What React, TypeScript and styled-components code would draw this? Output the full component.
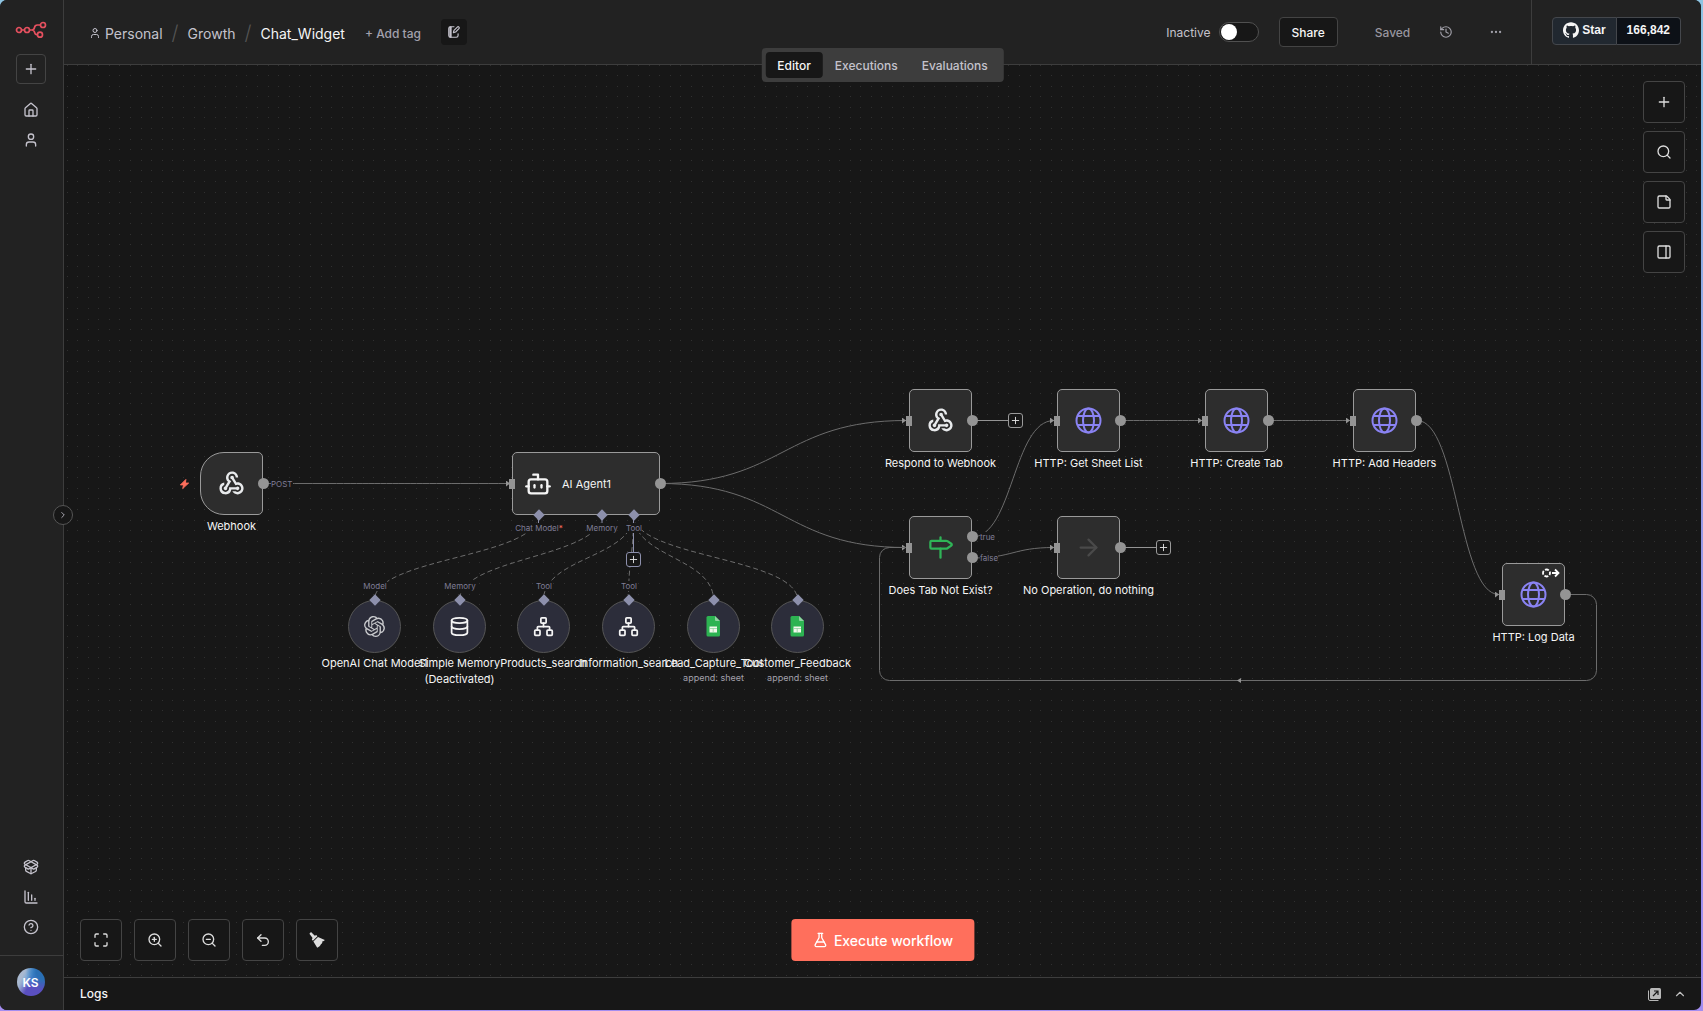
import React from "react";
import styled, { createGlobalStyle, css } from "styled-components";
import {
  ArrowRight,
  Bot,
  ChartColumnDecreasing,
  ChevronRight,
  ChevronUp,
  CircleHelp,
  Database,
  Ellipsis,
  FlaskConical,
  History,
  House,
  Maximize,
  Milestone,
  Network,
  PackageOpen,
  PanelRight,
  Plus,
  Search,
  StickyNote,
  Undo2,
  User,
  ZoomIn,
  ZoomOut,
} from "lucide-react";
import { MdWebhook } from "react-icons/md";
import { SiGithub, SiOpenai } from "react-icons/si";

const color = {
  panel: "#222222",
  canvas: "#171717",
  line: "#3d3d3d",
  node: "#2d2d2d",
  nodeBorder: "#9a9a9a",
  handle: "#949494",
  edge: "#6c6c6c",
  text: "#f5f5f5",
  soft: "#c4c2cc",
  muted: "#a3a1ad",
  aux: "#8d90ac",
  auxText: "#7f7d96",
  subNode: "#2c2d3a",
  primary: "#ff6f5c",
};

const GlobalStyle = createGlobalStyle`
  *, *::before, *::after { box-sizing: border-box; }
  body {
    margin: 0;
    font-family: Inter, "Liberation Sans", sans-serif;
    font-size: 12px;
    color: ${color.text};
    background: linear-gradient(180deg, #8ec4e2 0%, #8fb4e4 18%, #989be6 50%, #a48df0 100%);
  }
  button, input { font: inherit; color: inherit; }
  button { cursor: pointer; padding: 0; }
  a { color: inherit; text-decoration: none; }
`;

/* ---------- shell ---------- */

const Shell = styled.div`
  height: 100vh;
  padding: 0 2px 1px 0;
`;

const Window = styled.div`
  display: flex;
  height: 100%;
  overflow: hidden;
  border-radius: 7px;
  background: ${color.canvas};
`;

const Main = styled.div`
  flex: 1;
  min-width: 0;
  display: flex;
  flex-direction: column;
`;

/* ---------- sidebar ---------- */

const Sidebar = styled.nav`
  position: relative;
  width: 64px;
  flex: none;
  display: flex;
  flex-direction: column;
  background: ${color.panel};
  border-right: 1px solid ${color.line};
`;

const SidebarTop = styled.div`
  display: flex;
  flex-direction: column;
  align-items: center;
  padding: 20px 2px 0 0;
`;

const AddButton = styled.button`
  display: grid;
  place-items: center;
  width: 30px;
  height: 30px;
  margin: 14px 0 11px;
  background: none;
  border: 1px solid #444;
  border-radius: 4px;
  color: ${color.soft};
`;

const SideLink = styled.a`
  display: grid;
  place-items: center;
  width: 30px;
  height: 30px;
  color: ${color.soft};
`;

const SidebarBottom = styled(SidebarTop)`
  margin-top: auto;
  padding: 0 2px 13px 0;
`;

const SidebarUser = styled.div`
  display: grid;
  place-items: center;
  height: 55px;
  padding: 0 2px 2px 0;
  border-top: 1px solid ${color.line};
`;

const Avatar = styled.button`
  width: 28px;
  height: 28px;
  border: 0;
  border-radius: 50%;
  font-weight: 600;
  color: #fff;
  background:
    radial-gradient(circle at 95% 15%, #2a6fb4 0 20%, transparent 50%),
    linear-gradient(115deg, #a9b9d0 0 22%, transparent 48%),
    linear-gradient(160deg, #4f9ce0 0 30%, #5a4fc0 62%);
`;

const CollapseToggle = styled.button`
  position: absolute;
  z-index: 3;
  top: 505px;
  right: -10px;
  display: grid;
  place-items: center;
  width: 20px;
  height: 20px;
  border: 1px solid #555;
  border-radius: 50%;
  background: ${color.canvas};
  color: ${color.soft};
`;

/* ---------- header ---------- */

const Header = styled.header`
  position: relative;
  z-index: 2;
  flex: none;
  display: flex;
  height: 65px;
  background: ${color.panel};
  border-bottom: 1px solid ${color.line};
`;

const Breadcrumb = styled.div`
  display: flex;
  align-items: center;
  gap: 9px;
  padding: 2px 0 0 25px;
  font-size: 14px;
  color: ${color.soft};
`;

const Crumb = styled.a`
  display: flex;
  align-items: center;
  gap: 4px;
`;

const Slash = styled.span`
  font-size: 20px;
  font-weight: 300;
  line-height: 20px;
  color: #555;
`;

const WorkflowName = styled.h1`
  margin: 0;
  font-size: 14px;
  font-weight: 400;
  color: ${color.text};
`;

const AddTag = styled.button`
  margin-left: 11px;
  background: none;
  border: 0;
  font-size: 12px;
  font-weight: 500;
  color: ${color.muted};
`;

const NoteButton = styled.button`
  display: grid;
  place-items: center;
  width: 26px;
  height: 26px;
  margin: 0 0 2px 11px;
  background: ${color.canvas};
  border: 0;
  border-radius: 4px;
  color: ${color.soft};
`;

const HeaderActions = styled.div`
  display: flex;
  align-items: center;
  gap: 20px;
  margin-left: auto;
  padding-right: 21px;
`;

const ActivateLabel = styled.label`
  display: flex;
  align-items: center;
  gap: 8px;
  color: ${color.soft};
`;

const Switch = styled.input`
  appearance: none;
  width: 40px;
  height: 20px;
  margin: 0;
  padding: 1px;
  background: ${color.canvas};
  border: 1px solid #505050;
  border-radius: 10px;

  &::before {
    content: "";
    display: block;
    width: 16px;
    height: 16px;
    border-radius: 50%;
    background: #fff;
  }
  &:checked::before {
    margin-left: auto;
  }
`;

const ShareButton = styled.button`
  height: 30px;
  padding: 0 12px;
  background: ${color.canvas};
  border: 1px solid #444;
  border-radius: 4px;
  font-weight: 500;
`;

const Saved = styled.span`
  padding-left: 17px;
  font-weight: 500;
  color: #98969f;
`;

const GhostButton = styled.button<{ $width: number }>`
  display: grid;
  place-items: center;
  width: ${(p) => p.$width}px;
  height: 30px;
  background: none;
  border: 0;
  color: #a09fa8;
`;

const GithubArea = styled.div`
  display: flex;
  align-items: flex-start;
  padding: 17px 20px 0;
  border-left: 1px solid ${color.line};
`;

const GithubButton = styled.a<{ $side: "left" | "right" }>`
  display: flex;
  align-items: center;
  gap: 3px;
  height: 28px;
  padding: 0 10px 2px;
  border: 1px solid #44474c;
  font: bold 12px "Liberation Sans", sans-serif;
  ${(p) =>
    p.$side === "left"
      ? css`
          background: #212830;
          border-radius: 4px 0 0 4px;
        `
      : css`
          background: #0d1117;
          border-left: 0;
          border-radius: 0 4px 4px 0;
        `}
`;

const Tabs = styled.div`
  position: absolute;
  top: 48px;
  left: 50%;
  transform: translateX(-50%);
  display: flex;
  padding: 4px;
  background: ${color.line};
  border-radius: 4px;
`;

const Tab = styled.button<{ $active?: boolean }>`
  height: 26px;
  padding: 0 12px;
  border: 0;
  border-radius: 4px;
  font-weight: 500;
  background: ${(p) => (p.$active ? color.canvas : "none")};
  color: ${(p) => (p.$active ? color.text : color.soft)};
`;

/* ---------- canvas ---------- */

const Canvas = styled.main`
  position: relative;
  flex: 1;
  min-height: 0;
  overflow: hidden;
`;

const Drawing = styled.svg`
  position: absolute;
  inset: 0;
  width: 100%;
  height: 100%;
`;

const Placed = styled.div<{ $x: number; $y: number; $w: number }>`
  position: absolute;
  left: ${(p) => p.$x}px;
  top: ${(p) => p.$y}px;
  width: ${(p) => p.$w}px;
  display: flex;
  flex-direction: column;
  align-items: center;
`;

const NodeBox = styled.div<{ $trigger?: boolean; $wide?: boolean }>`
  position: relative;
  width: 100%;
  height: 63px;
  display: flex;
  align-items: center;
  justify-content: ${(p) => (p.$wide ? "flex-start" : "center")};
  gap: 10px;
  padding-left: ${(p) => (p.$wide ? 11 : 0)}px;
  background: ${color.node};
  border: 1px solid ${color.nodeBorder};
  border-radius: ${(p) => (p.$trigger ? "24px 5px 5px 24px" : "5px")};
  font-size: 11px;
`;

const SubNodeBox = styled.div`
  position: relative;
  display: grid;
  place-items: center;
  width: 53px;
  height: 53px;
  background: ${color.subNode};
  border: 1px solid #555;
  border-radius: 50%;
`;

const NodeName = styled.div<{ $tight?: boolean }>`
  margin-top: ${(p) => (p.$tight ? 2 : 3)}px;
  font-size: 11px;
  line-height: 16px;
  text-align: center;
  white-space: pre;
`;

const NodeDetail = styled.div`
  font-size: 9px;
  line-height: 14px;
  white-space: nowrap;
  color: ${color.muted};
`;

const InputHandle = styled.i`
  position: absolute;
  left: -4px;
  top: calc(50% - 5px);
  width: 6px;
  height: 10px;
  background: ${color.handle};
`;

const OutputHandle = styled.i<{ $at?: string }>`
  position: absolute;
  right: -7px;
  top: calc(${(p) => p.$at ?? "50%"} - 6px);
  width: 11px;
  height: 11px;
  border-radius: 50%;
  background: ${color.handle};
`;

const Diamond = styled.i<{ $left: string; $edge: "top" | "bottom" }>`
  position: absolute;
  left: calc(${(p) => p.$left} - 4px);
  ${(p) => p.$edge}: -5px;
  width: 8px;
  height: 8px;
  background: ${color.aux};
  transform: rotate(45deg);
`;

const Corner = styled.span`
  position: absolute;
  top: 4px;
  right: 4px;
  display: flex;
`;

const PortLabel = styled.span<{ $x: number; $y: number; $centered?: boolean }>`
  position: absolute;
  left: ${(p) => p.$x}px;
  top: ${(p) => p.$y}px;
  transform: ${(p) => (p.$centered ? "translateX(-50%)" : "none")};
  font-size: 8px;
  line-height: 10px;
  white-space: nowrap;
  color: ${color.auxText};
  background: ${color.canvas};
`;

const Required = styled.b`
  font-weight: 400;
  color: ${color.primary};
`;

const PlusButton = styled.button<{ $x: number; $y: number; $aux?: boolean }>`
  position: absolute;
  left: ${(p) => p.$x}px;
  top: ${(p) => p.$y}px;
  display: grid;
  place-items: center;
  width: 15px;
  height: 15px;
  background: ${color.canvas};
  border: 1px solid ${(p) => (p.$aux ? color.aux : color.nodeBorder)};
  border-radius: 3px;
  color: #e4e4e4;
`;

const TriggerMark = styled.span`
  position: absolute;
  left: 115px;
  top: 413px;
  display: flex;
  color: ${color.primary};
`;

/* ---------- canvas controls ---------- */

const ToolButton = styled.button`
  display: grid;
  place-items: center;
  width: 42px;
  height: 42px;
  background: ${color.canvas};
  border: 1px solid #444;
  border-radius: 4px;
  color: #dddddd;
`;

const SideTools = styled.div`
  position: absolute;
  top: 16px;
  right: 16px;
  display: flex;
  flex-direction: column;
  gap: 8px;
`;

const ViewTools = styled.div`
  position: absolute;
  left: 16px;
  bottom: 16px;
  display: flex;
  gap: 12px;
`;

const ExecuteButton = styled.button`
  position: absolute;
  left: 50%;
  bottom: 16px;
  transform: translateX(-50%);
  display: flex;
  align-items: center;
  gap: 6px;
  height: 42px;
  padding: 0 21px;
  background: ${color.primary};
  border: 0;
  border-radius: 4px;
  font-size: 14px;
  font-weight: 500;
  color: #fff;
`;

const Logs = styled.footer`
  flex: none;
  display: flex;
  align-items: center;
  height: 33px;
  padding: 0 14px 2px 16px;
  border-top: 1px solid ${color.line};
  font-weight: 500;
`;

const LogsActions = styled.div`
  display: flex;
  gap: 12px;
  margin-left: auto;
`;

const LogsButton = styled.button`
  display: grid;
  place-items: center;
  width: 14px;
  height: 16px;
  padding-top: 2px;
  background: none;
  border: 0;
  color: #bdbdbd;
`;

/* ---------- drawings ---------- */

const Logo = () => (
  <svg width="32" height="20" viewBox="0 0 32 20" fill="none" stroke="#e5505f" strokeWidth="1.7">
    <circle cx="4" cy="10" r="2.5" />
    <circle cx="12" cy="10" r="2.5" />
    <circle cx="28" cy="5" r="2.5" />
    <circle cx="25" cy="14.7" r="2.5" />
    <path d="M6.5 10h3M14.5 10H17M25.5 5h-3.2c-1.6 0-2.4.8-2.7 2.2C19.3 9 18.6 10 17 10c1.6 0 2.3 1 2.6 2.4.3 1.5 1 2.3 2.4 2.3h.5" />
  </svg>
);

const NoteIcon = () => (
  <svg width="14" height="14" viewBox="0 0 24 24" fill="none" stroke="currentColor" strokeWidth="2" strokeLinecap="round" strokeLinejoin="round">
    <path d="M12 3H6a3 3 0 0 0-3 3v12a3 3 0 0 0 3 3h10a3 3 0 0 0 3-3v-3" />
    <path d="M6 4v16" strokeWidth="4" />
    <path d="M20.5 3.5a2 2 0 0 0-2.8 0L12 9.2 11 13l3.8-1 5.700-5.700a2 2 0 0 0 0-2.800z" />
  </svg>
);

const BroomIcon = () => (
  <svg width="16" height="16" viewBox="0 0 16 16" fill="currentColor">
    <path d="M.4 1.700 2 .1l3.800 3.700 1.500-.7 1.100 1.100-4.500 4.500-1.100-1.100.8-1.500z" />
    <path d="M9 4.900 15.800 8c-.4 1-1.600 1.300-2.400 1.300.1 1.400-.4 2.400-1.500 2.900-.5 1.500-1.800 2.700-3.700 3.600L4.400 9.500z" />
  </svg>
);

const GlobeIcon = () => (
  <svg width="27" height="27" viewBox="0 0 27 27" fill="none" stroke="#8a83f3" strokeWidth="2">
    <circle cx="13.5" cy="13.5" r="12" />
    <ellipse cx="13.5" cy="13.5" rx="5.5" ry="12" />
    <path d="M2.5 9h22M2.5 18h22" />
  </svg>
);

const SheetIcon = () => (
  <svg width="19" height="21" viewBox="0 0 19 21">
    <path d="M4 0H11l5 5v14a1.500 1.500 0 0 1-1.500 1.500H4A1.500 1.500 0 0 1 2.500 19V1.500A1.500 1.500 0 0 1 4 0z" fill="#2db352" />
    <path d="M11 0l5 5h-4a1 1 0 0 1-1-1z" fill="#8fd3a0" />
    <path d="M5.500 10.500h7.500v6H5.500z" fill="#f2f7ec" />
    <path d="M5.500 12.500h7.500M9.200 12v4.500" stroke="#8fd3a0" strokeWidth="0.8" />
  </svg>
);

const LoopMark = () => (
  <svg width="18" height="10" viewBox="0 0 18 10" fill="none" stroke="#fff" strokeWidth="1.8">
    <circle cx="4.5" cy="5" r="3.5" strokeDasharray="4 1.5" strokeDashoffset="2" />
    <path d="M10 5h6.500M13 1.500l3.500 3.500-3.500 3.500" />
  </svg>
);

const BoltIcon = () => (
  <svg width="11" height="12" viewBox="0 0 24 24" fill="currentColor" stroke="currentColor" strokeWidth="2" strokeLinejoin="round">
    <path d="M15 2 3 14h7l-2 8L21 10h-7z" />
  </svg>
);

const PopOutIcon = () => (
  <svg width="13" height="13" viewBox="0 0 13 13">
    <path d="M3.500 0h8A1.500 1.500 0 0 1 13 1.500v8a1.500 1.500 0 0 1-1.500 1.500h-8A1.500 1.500 0 0 1 2 9.500v-8A1.500 1.500 0 0 1 3.500 0z" fill="#b8b8b8" />
    <path d="M.5 2.500V11a1.500 1.500 0 0 0 1.500 1.500h8.500" fill="none" stroke="#b8b8b8" />
    <path d="M5 8l4.500-4.500M6 3h4v4" fill="none" stroke="#171717" strokeWidth="1.2" />
  </svg>
);

/* ---------- workflow data, in canvas coordinates ---------- */

type WorkflowNode = {
  name: string;
  x: number;
  y: number;
  icon: React.ReactNode;
  trigger?: boolean;
  outputs?: string[];
  looping?: boolean;
};

const nodes: WorkflowNode[] = [
  { name: "Webhook", x: 136, y: 387, icon: <MdWebhook size={29} color="#e8eaec" />, trigger: true },
  { name: "Respond to Webhook", x: 845, y: 324, icon: <MdWebhook size={29} color="#e8eaec" /> },
  { name: "HTTP: Get Sheet List", x: 993, y: 324, icon: <GlobeIcon /> },
  { name: "HTTP: Create Tab", x: 1141, y: 324, icon: <GlobeIcon /> },
  { name: "HTTP: Add Headers", x: 1289, y: 324, icon: <GlobeIcon /> },
  { name: "Does Tab Not Exist?", x: 845, y: 451, icon: <Milestone size={27} color="#2fb457" />, outputs: ["33%", "67%"] },
  { name: "No Operation, do nothing", x: 993, y: 451, icon: <ArrowRight size={27} color="#4a4a4a" /> },
  { name: "HTTP: Log Data", x: 1438, y: 498, icon: <GlobeIcon />, looping: true },
];

const subNodes = [
  { name: "OpenAI Chat Model1", x: 284, port: "Model", icon: <SiOpenai size={21} color="#c9cacd" /> },
  { name: "Simple Memory\n(Deactivated)", x: 369, port: "Memory", icon: <Database size={21} /> },
  { name: "Products_search", x: 453, port: "Tool", icon: <Network size={21} /> },
  { name: "Information_search", x: 538, port: "Tool", icon: <Network size={21} /> },
  { name: "Lead_Capture_Tool", x: 623, detail: "append: sheet", icon: <SheetIcon /> },
  { name: "Customer_Feedback", x: 707, detail: "append: sheet", icon: <SheetIcon /> },
];

type Point = [number, number];

const horizontal = ([x1, y1]: Point, [x2, y2]: Point) => {
  const mid = (x1 + x2) / 2;
  return `M${x1} ${y1}C${mid} ${y1} ${mid} ${y2} ${x2} ${y2}`;
};

const vertical = ([x1, y1]: Point, [x2, y2]: Point) => {
  const mid = (y1 + y2) / 2;
  return `M${x1} ${y1}C${x1} ${mid} ${x2} ${mid} ${x2} ${y2}`;
};

const mainEdges: [Point, Point][] = [
  [[199, 418.5], [446, 418.5]],
  [[596, 418.5], [842, 355.5]],
  [[596, 418.5], [842, 482.5]],
  [[1056, 355.5], [1138, 355.5]],
  [[1205, 355.5], [1286, 355.5]],
  [[1353, 355.5], [1435, 529.5]],
  [[908, 472], [990, 355.5]],
  [[908, 493], [990, 482.5]],
];

const auxEdges: [Point, Point][] = [
  [[474.5, 450], [310.5, 535]],
  [[538, 450], [395.5, 535]],
  [[569.5, 450], [479.5, 535]],
  [[569.5, 450], [564.5, 535]],
  [[569.5, 450], [649.5, 535]],
  [[569.5, 450], [733.5, 535]],
];

const TILE = 127;
const DOTS = 12;

const CanvasDrawing = () => (
  <Drawing aria-hidden="true">
    <defs>
      <pattern id="dots" x="3" y="0" width={TILE} height={TILE} patternUnits="userSpaceOnUse">
        {Array.from({ length: DOTS * DOTS }, (_, i) => (
          <rect
            key={i}
            x={Math.floor(((i % DOTS) * TILE) / DOTS)}
            y={Math.floor((Math.floor(i / DOTS) * TILE) / DOTS)}
            width="1"
            height="1"
            fill="#303030"
          />
        ))}
      </pattern>
      <marker id="arrow" viewBox="0 0 6 6" refX="5" refY="3" markerWidth="6" markerHeight="6" orient="auto">
        <path d="M1 0l4 3-4 3z" fill={color.handle} />
      </marker>
    </defs>
    <rect width="100%" height="100%" fill="url(#dots)" />
    <g fill="none" stroke={color.edge}>
      {mainEdges.map(([from, to], i) => (
        <path key={i} d={horizontal(from, to)} markerEnd="url(#arrow)" />
      ))}
      <path d="M1501 529.5H1522.5a10 10 0 0 1 10 10V605.5a10 10 0 0 1-10 10H825.5a10 10 0 0 1-10-10V492.5a10 10 0 0 1 10-10H842" />
      <g strokeDasharray="5 3">
        {auxEdges.map(([from, to], i) => (
          <path key={i} d={vertical(from, to)} />
        ))}
      </g>
    </g>
    <path d="M1177 613v5l-4-2.5z" fill={color.handle} />
    <path d="M908 355.5h38M1056 482.5h38" stroke={color.handle} strokeWidth="1" />
    <path d="M569.5 450v38M474.5 450v8M538 450v8" stroke={color.aux} strokeWidth="1" />
  </Drawing>
);

const AgentNode = () => (
  <Placed $x={448} $y={387} $w={148}>
    <NodeBox $wide>
      <InputHandle />
      <Bot size={28} />
      AI Agent1
      <OutputHandle />
      <Diamond $left="26px" $edge="bottom" />
      <Diamond $left="89px" $edge="bottom" />
      <Diamond $left="121px" $edge="bottom" />
    </NodeBox>
  </Placed>
);

export default function App() {
  return (
    <Shell>
      <GlobalStyle />
      <Window>
        <Sidebar aria-label="Main">
          <SidebarTop>
            <Logo />
            <AddButton aria-label="Create"><Plus size={16} /></AddButton>
            <SideLink href="#home" aria-label="Overview"><House size={16} /></SideLink>
            <SideLink href="#personal" aria-label="Personal"><User size={16} /></SideLink>
          </SidebarTop>
          <SidebarBottom>
            <SideLink href="#templates" aria-label="Templates"><PackageOpen size={16} /></SideLink>
            <SideLink href="#insights" aria-label="Insights"><ChartColumnDecreasing size={16} /></SideLink>
            <SideLink href="#help" aria-label="Help"><CircleHelp size={16} /></SideLink>
          </SidebarBottom>
          <SidebarUser>
            <Avatar>KS</Avatar>
          </SidebarUser>
          <CollapseToggle aria-label="Expand sidebar"><ChevronRight size={10} /></CollapseToggle>
        </Sidebar>

        <Main>
          <Header>
            <Breadcrumb>
              <Crumb href="#personal"><User size={12} />Personal</Crumb>
              <Slash>/</Slash>
              <Crumb href="#growth">Growth</Crumb>
              <Slash>/</Slash>
              <WorkflowName>Chat_Widget</WorkflowName>
              <AddTag>+ Add tag</AddTag>
              <NoteButton aria-label="Edit description"><NoteIcon /></NoteButton>
            </Breadcrumb>
            <HeaderActions>
              <ActivateLabel>
                Inactive
                <Switch type="checkbox" role="switch" />
              </ActivateLabel>
              <ShareButton>Share</ShareButton>
              <Saved>Saved</Saved>
              <GhostButton $width={32} aria-label="History"><History size={14} /></GhostButton>
              <GhostButton $width={28} aria-label="More"><Ellipsis size={14} /></GhostButton>
            </HeaderActions>
            <GithubArea>
              <GithubButton href="#star" $side="left"><SiGithub size={16} />Star</GithubButton>
              <GithubButton href="#stargazers" $side="right">166,842</GithubButton>
            </GithubArea>
            <Tabs>
              <Tab $active>Editor</Tab>
              <Tab>Executions</Tab>
              <Tab>Evaluations</Tab>
            </Tabs>
          </Header>

          <Canvas>
            <CanvasDrawing />

            <TriggerMark><BoltIcon /></TriggerMark>
            <PortLabel $x={207} $y={414}>POST</PortLabel>
            <PortLabel $x={916} $y={467}>true</PortLabel>
            <PortLabel $x={916} $y={488}>false</PortLabel>
            <PortLabel $x={475} $y={458} $centered>Chat Model<Required>*</Required></PortLabel>
            <PortLabel $x={538} $y={458} $centered>Memory</PortLabel>
            <PortLabel $x={570} $y={458} $centered>Tool</PortLabel>

            {nodes.map((node) => (
              <Placed key={node.name} $x={node.x} $y={node.y} $w={63}>
                <NodeBox $trigger={node.trigger}>
                  {!node.trigger && <InputHandle />}
                  {node.icon}
                  {(node.outputs ?? ["50%"]).map((at) => (
                    <OutputHandle key={at} $at={at} />
                  ))}
                  {node.looping && <Corner><LoopMark /></Corner>}
                </NodeBox>
                <NodeName>{node.name}</NodeName>
              </Placed>
            ))}
            <AgentNode />

            {subNodes.map((node) => (
              <React.Fragment key={node.name}>
                {node.port && <PortLabel $x={node.x + 27} $y={516} $centered>{node.port}</PortLabel>}
                <Placed $x={node.x} $y={535} $w={53}>
                  <SubNodeBox>
                    <Diamond $left="50%" $edge="top" />
                    {node.icon}
                  </SubNodeBox>
                  <NodeName $tight>{node.name}</NodeName>
                  {node.detail && <NodeDetail>{node.detail}</NodeDetail>}
                </Placed>
              </React.Fragment>
            ))}

            <PlusButton $x={944} $y={348} aria-label="Add node"><Plus size={11} /></PlusButton>
            <PlusButton $x={1092} $y={475} aria-label="Add node"><Plus size={11} /></PlusButton>
            <PlusButton $x={562} $y={487} $aux aria-label="Add tool"><Plus size={11} /></PlusButton>

            <SideTools>
              <ToolButton aria-label="Add node"><Plus size={16} /></ToolButton>
              <ToolButton aria-label="Search"><Search size={16} /></ToolButton>
              <ToolButton aria-label="Add sticky note"><StickyNote size={16} /></ToolButton>
              <ToolButton aria-label="Toggle panel"><PanelRight size={16} /></ToolButton>
            </SideTools>
            <ViewTools>
              <ToolButton aria-label="Fit view"><Maximize size={16} /></ToolButton>
              <ToolButton aria-label="Zoom in"><ZoomIn size={16} /></ToolButton>
              <ToolButton aria-label="Zoom out"><ZoomOut size={16} /></ToolButton>
              <ToolButton aria-label="Undo"><Undo2 size={16} /></ToolButton>
              <ToolButton aria-label="Tidy up"><BroomIcon /></ToolButton>
            </ViewTools>
            <ExecuteButton><FlaskConical size={16} />Execute workflow</ExecuteButton>
          </Canvas>

          <Logs>
            Logs
            <LogsActions>
              <LogsButton aria-label="Pop out"><PopOutIcon /></LogsButton>
              <LogsButton aria-label="Open logs"><ChevronUp size={14} /></LogsButton>
            </LogsActions>
          </Logs>
        </Main>
      </Window>
    </Shell>
  );
}
